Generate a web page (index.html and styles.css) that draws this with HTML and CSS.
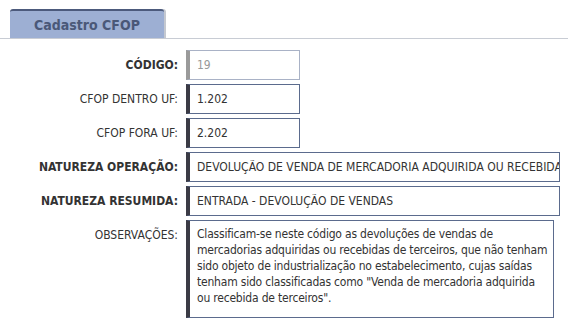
FILE: index.html
```html
<!DOCTYPE html>
<html lang="pt-BR">
<head>
    <meta charset="UTF-8">
    <meta name="viewport" content="width=device-width, initial-scale=1.0">
    <title>Cadastro CFOP</title>
    <link rel="stylesheet" href="styles.css">
</head>
<body>
    <div class="tabs">
        <div class="tab">Cadastro CFOP</div>
    </div>
    <form class="form">
        <label class="label bold">CÓDIGO:</label>
        <input class="field short disabled" type="text" value="19" readonly>

        <label class="label">CFOP DENTRO UF:</label>
        <input class="field short" type="text" value="1.202" readonly>

        <label class="label">CFOP FORA UF:</label>
        <input class="field short" type="text" value="2.202" readonly>

        <label class="label bold">NATUREZA OPERAÇÃO:</label>
        <input class="field long" type="text" value="DEVOLUÇÃO DE VENDA DE MERCADORIA ADQUIRIDA OU RECEBIDA DE TERCEIROS" readonly>

        <label class="label bold">NATUREZA RESUMIDA:</label>
        <input class="field long" type="text" value="ENTRADA - DEVOLUÇÃO DE VENDAS" readonly>

        <label class="label top">OBSERVAÇÕES:</label>
        <textarea class="field memo" readonly>Classificam-se neste código as devoluções de vendas de
mercadorias adquiridas ou recebidas de terceiros, que não tenham
sido objeto de industrialização no estabelecimento, cujas saídas
tenham sido classificadas como "Venda de mercadoria adquirida
ou recebida de terceiros".</textarea>
    </form>
</body>
</html>
```

FILE: styles.css
```css
body {
    margin: 0;
    background: #fff;
    font-family: "DejaVu Sans Condensed", "Liberation Sans", sans-serif;
    font-size: 12px;
    color: #333;
}
.tabs {
    padding: 9px 0 0 10px;
    border-bottom: 1px solid #c8ccd4;
}
.tab {
    width: 154px;
    height: 27px;
    line-height: 28px;
    text-align: center;
    background-color: #9dafd3;
    border-top: 2px solid #4c5a7c;
    border-radius: 3px 3px 0 0;
    box-shadow: 2px 0 0 #c4c8d0;
    color: #4a5878;
    font-weight: bold;
    font-size: 14px;
}
.form {
    display: grid;
    grid-template-columns: 178px auto;
    column-gap: 8px;
    row-gap: 4px;
    padding-top: 11px;
}
.label {
    display: flex;
    align-items: center;
    justify-content: flex-end;
    color: #333;
}
.label.bold {
    font-weight: bold;
}
.label.top {
    align-items: flex-start;
    padding-top: 8px;
}
.field {
    box-sizing: border-box;
    height: 30px;
    margin: 0;
    padding: 0 0 0 7px;
    border: 1px solid #5b6b8d;
    border-left: 4px solid #3b3b45;
    border-radius: 0;
    background: #fff;
    font-family: inherit;
    font-size: 12px;
    color: #333;
    outline: none;
}
.short {
    width: 114px;
}
.long {
    width: 374px;
}
.disabled {
    border-color: #a9b2c6;
    border-left-color: #9a9a9a;
    color: #999;
}
.memo {
    width: 368px;
    height: 98px;
    padding: 5px 0 0 7px;
    line-height: 16px;
    letter-spacing: -0.2px;
    white-space: pre;
    resize: none;
    overflow: hidden;
}
```
